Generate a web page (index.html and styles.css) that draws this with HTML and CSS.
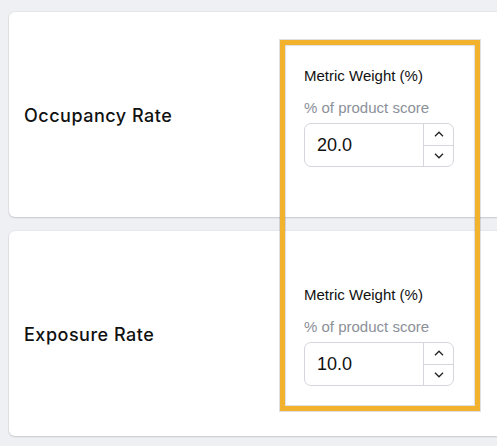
FILE: index.html
```html
<!DOCTYPE html>
<html>
<head>
<meta charset="utf-8">
<link rel="stylesheet" href="styles.css">
</head>
<body>
<div class="page">
  <div class="card">
    <div class="metric-name">Occupancy Rate</div>
    <div class="weight">
      <div class="label">Metric Weight (%)</div>
      <div class="hint">% of product score</div>
      <div class="input">
        <div class="value">20.0</div>
        <div class="spin">
          <div class="btn"><svg width="10" height="6" viewBox="0 0 10 6"><path d="M1 5.2 L5 1.2 L9 5.2" fill="none" stroke="#222" stroke-width="1.3"/></svg></div>
          <div class="btn"><svg width="10" height="6" viewBox="0 0 10 6"><path d="M1 0.8 L5 4.8 L9 0.8" fill="none" stroke="#222" stroke-width="1.3"/></svg></div>
        </div>
      </div>
    </div>
  </div>
  <div class="card">
    <div class="metric-name">Exposure Rate</div>
    <div class="weight">
      <div class="label">Metric Weight (%)</div>
      <div class="hint">% of product score</div>
      <div class="input">
        <div class="value">10.0</div>
        <div class="spin">
          <div class="btn"><svg width="10" height="6" viewBox="0 0 10 6"><path d="M1 5.2 L5 1.2 L9 5.2" fill="none" stroke="#222" stroke-width="1.3"/></svg></div>
          <div class="btn"><svg width="10" height="6" viewBox="0 0 10 6"><path d="M1 0.8 L5 4.8 L9 0.8" fill="none" stroke="#222" stroke-width="1.3"/></svg></div>
        </div>
      </div>
    </div>
  </div>
  <div class="highlight"></div>
</div>
</body>
</html>
```

FILE: styles.css
```css
html, body {
  margin: 0;
  padding: 0;
  background: #eef0f4;
  overflow: hidden;
}
.page {
  position: relative;
  padding: 12px 0 0 9px;
  display: flex;
  flex-direction: column;
  gap: 14px;
  width: 497px;
  height: 446px;
  box-sizing: border-box;
}
.card {
  background: #fff;
  border-radius: 6px 0 0 6px;
  box-shadow: 0 1px 2px rgba(0,0,0,0.14), 0 0 0 1px rgba(0,0,0,0.03);
  height: 205px;
  display: flex;
  padding-left: 15px;
  box-sizing: border-box;
}
.metric-name {
  width: 280px;
  align-self: center;
  font-family: "Inter", sans-serif;
  font-weight: 500;
  font-size: 18px;
  letter-spacing: 0.5px;
  color: #111;
  padding-top: 2px;
}
.weight {
  padding-top: 55px;
  width: 150px;
  font-family: "Liberation Sans", Arial, sans-serif;
}
.label {
  font-size: 15px;
  line-height: 18px;
  color: #111;
  margin-bottom: 14px;
}
.hint {
  font-size: 15px;
  line-height: 18px;
  color: #8b9099;
  margin-bottom: 6px;
}
.input {
  height: 44px;
  border: 1px solid #d4d6db;
  border-radius: 7px;
  box-sizing: border-box;
  display: flex;
}
.value {
  flex: 1;
  font-size: 18px;
  color: #111;
  padding-left: 12px;
  display: flex;
  align-items: center;
}
.spin {
  width: 29px;
  border-left: 1px solid #d4d6db;
  display: flex;
  flex-direction: column;
}
.btn {
  flex: 1;
  display: flex;
  align-items: center;
  justify-content: center;
}
.btn + .btn {
  border-top: 1px solid #d4d6db;
}
.highlight {
  position: absolute;
  left: 280px;
  top: 40px;
  width: 200px;
  height: 371px;
  box-sizing: border-box;
  border: 5px solid #f3b22e;
  box-shadow: 0 0 0 1px rgba(0,0,0,0.12), inset 0 0 0 1px rgba(0,0,0,0.12);
}
```
